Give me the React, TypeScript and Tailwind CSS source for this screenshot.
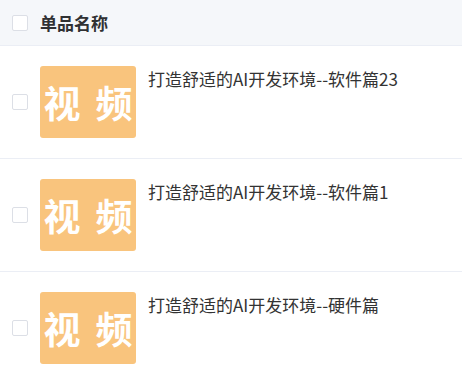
const items = [
  { id: 1, title: "打造舒适的AI开发环境--软件篇23" },
  { id: 2, title: "打造舒适的AI开发环境--软件篇1" },
  { id: 3, title: "打造舒适的AI开发环境--硬件篇" },
];

const font = "font-['Microsoft_YaHei','Noto_Sans_CJK_SC',sans-serif]";

function Box() {
  return <span className="block w-4 h-4 rounded-[2px] border border-[#dcdfe6] bg-white" />;
}

export default function App() {
  return (
    <div className={`w-[462px] h-[384px] bg-white overflow-hidden text-[#303133] ${font}`}>
      <div className="flex items-center h-[46px] bg-[#f5f7fa] border-b border-[#ebeef5]">
        <div className="w-10 pl-3 pt-[1px]">
          <Box />
        </div>
        <span className="text-[17px] font-bold">单品名称</span>
      </div>
      {items.map((item) => (
        <div key={item.id} className="flex items-center h-[113px] border-b border-[#ebeef5]">
          <div className="w-10 pl-3">
            <Box />
          </div>
          <div className="flex gap-3 self-start pt-5">
            <div className="flex items-center justify-center gap-[15px] w-24 h-[72px] rounded-[3px] bg-[#f9c47d] text-white text-[37px] font-bold leading-none">
              <span>视</span>
              <span>频</span>
            </div>
            <p className="text-[17px] leading-6 pt-[1px] text-[#333]">{item.title}</p>
          </div>
        </div>
      ))}
    </div>
  );
}
